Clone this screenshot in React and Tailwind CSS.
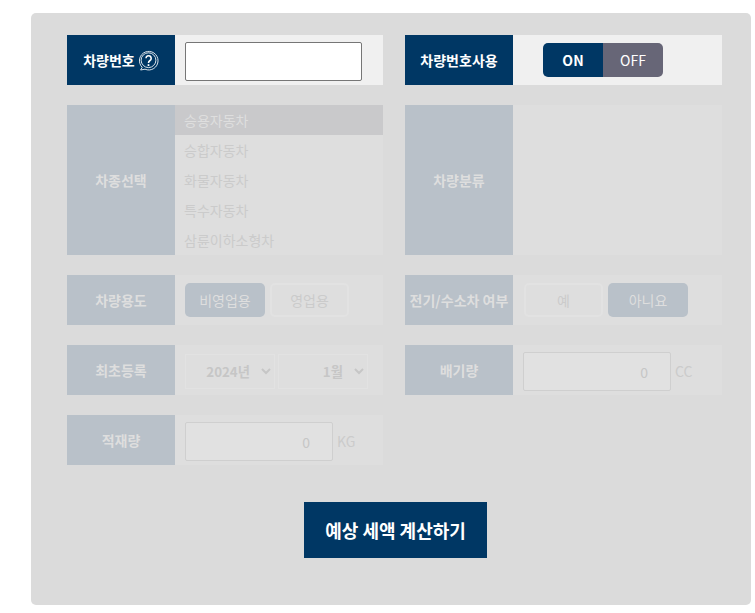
const navy = 'bg-[#003764]';

function Label({ children, dim, className = '' }) {
  return (
    <div className={`flex w-[108px] shrink-0 items-center justify-center text-[14px] font-bold whitespace-nowrap ${dim ? 'bg-[#b9c1c9] text-[#dedede]' : `${navy} text-white`} ${className}`}>
      {children}
    </div>
  );
}

function Row({ label, dim = true, children, labelExtra, h = 'h-[50px]' }) {
  return (
    <div className={`flex ${h} ${dim ? 'bg-[#dedede]' : 'bg-[#f0f0f0]'}`}>
      <Label dim={dim}>{label}{labelExtra}</Label>
      {children}
    </div>
  );
}

function HelpIcon() {
  return (
    <svg className="ml-[3px]" width="21" height="21" viewBox="0 0 21 21" fill="none" stroke="#dbe3ea">
      <path d="M4.2 17.3A9.3 9.3 0 1 1 7 19.2L2.6 20Z" strokeWidth="1" />
      <circle cx="10.5" cy="10.2" r="7.4" strokeWidth="1" />
      <path d="M8 8.2a2.6 2.6 0 1 1 4 2.3c-1 .7-1.5 1.1-1.5 2.4" strokeWidth="1.6" stroke="#ffffff" />
      <path d="M10.5 14.2v1.8" strokeWidth="1.7" stroke="#ffffff" />
    </svg>
  );
}

function Choice({ active, children, className = '' }) {
  return (
    <div className={`flex h-[34px] items-center justify-center rounded-[5px] text-[14px] ${active ? 'bg-[#b9c1c9] text-[#dedede]' : 'border-2 border-[#e2e2e2] text-[#cbcbcb]'} ${className}`}>
      {children}
    </div>
  );
}

function NumberField({ unit }) {
  return (
    <div className="flex items-start pt-[7px] pl-[10px]">
      <input
        readOnly
        value="0"
        className="h-[39px] w-[148px] rounded-[2px] border border-[#cfcfcf] bg-[#e1e1e1] pr-[22px] text-right text-[14px] text-[#c6c6c6] outline-none"
      />
      <span className="ml-[4px] text-[14px] leading-[38px] text-[#cbcbcb]">{unit}</span>
    </div>
  );
}

function DateSelect({ value }) {
  return (
    <select
      disabled
      value={value}
      onChange={() => {}}
      className="h-[35px] w-[90px] border border-[#e2e2e2] pr-[8px] text-[13.33px] font-bold text-[#c6c6c6] opacity-100 [text-align-last:right]"
    >
      <option value={value}>{value}</option>
    </select>
  );
}

const carTypes = ['승용자동차', '승합자동차', '화물자동차', '특수자동차', '삼륜이하소형차'];

export default function App() {
  return (
    <div className="h-[613px] w-[755px] overflow-hidden bg-white pt-[13px] pl-[31px] font-['Noto_Sans_CJK_KR','Noto_Sans',sans-serif]">
      <div className="h-[592px] w-[720px] rounded-[5px] bg-[#dbdbdb] pt-[22px] pl-[36px]">
        <div className="grid w-[655px] grid-cols-[316px_317px] gap-x-[22px] gap-y-[20px]">
          <Row label="차량번호" dim={false} labelExtra={<HelpIcon />}>
            <div className="flex items-start pt-[7px] pl-[10px]">
              <input className="h-[39px] w-[177px] rounded-[2px] border border-[#767676] bg-white outline-none" />
            </div>
          </Row>
          <Row label="차량번호사용" dim={false}>
            <div className="flex items-center pl-[30px]">
              <div className="flex h-[34px] w-[120px] overflow-hidden rounded-[5px] text-[14px]">
                <div className={`flex w-[60px] items-center justify-center font-bold text-white ${navy}`}>ON</div>
                <div className="flex w-[60px] items-center justify-center bg-[#676677] text-white">OFF</div>
              </div>
            </div>
          </Row>

          <Row label="차종선택" h="h-[150px]">
            <ul className="flex-1 text-[14px] text-[#cbcbcb]">
              {carTypes.map((t, i) => (
                <li key={t} className={`flex h-[30px] items-center pl-[9px] ${i === 0 ? 'bg-[#c9c9cb] text-[#dedede]' : ''}`}>{t}</li>
              ))}
            </ul>
          </Row>
          <Row label="차량분류" h="h-[150px]" />

          <Row label="차량용도">
            <div className="flex items-center gap-[5px] pl-[10px]">
              <Choice active className="w-[80px]">비영업용</Choice>
              <Choice className="w-[79px]">영업용</Choice>
            </div>
          </Row>
          <Row label="전기/수소차 여부">
            <div className="flex items-center gap-[5px] pl-[11px]">
              <Choice className="w-[79px]">예</Choice>
              <Choice active className="w-[80px]">아니요</Choice>
            </div>
          </Row>

          <Row label="최초등록">
            <div className="flex items-start gap-[3px] pt-[9px] pl-[10px]">
              <DateSelect value="2024년" />
              <DateSelect value="1월" />
            </div>
          </Row>
          <Row label="배기량">
            <NumberField unit="CC" />
          </Row>

          <Row label="적재량">
            <NumberField unit="KG" />
          </Row>
        </div>

        <button className={`mt-[37px] ml-[237px] flex h-[56px] w-[183px] items-center justify-center text-[18px] font-bold text-white ${navy}`}>
          예상 세액 계산하기
        </button>
      </div>
    </div>
  );
}
